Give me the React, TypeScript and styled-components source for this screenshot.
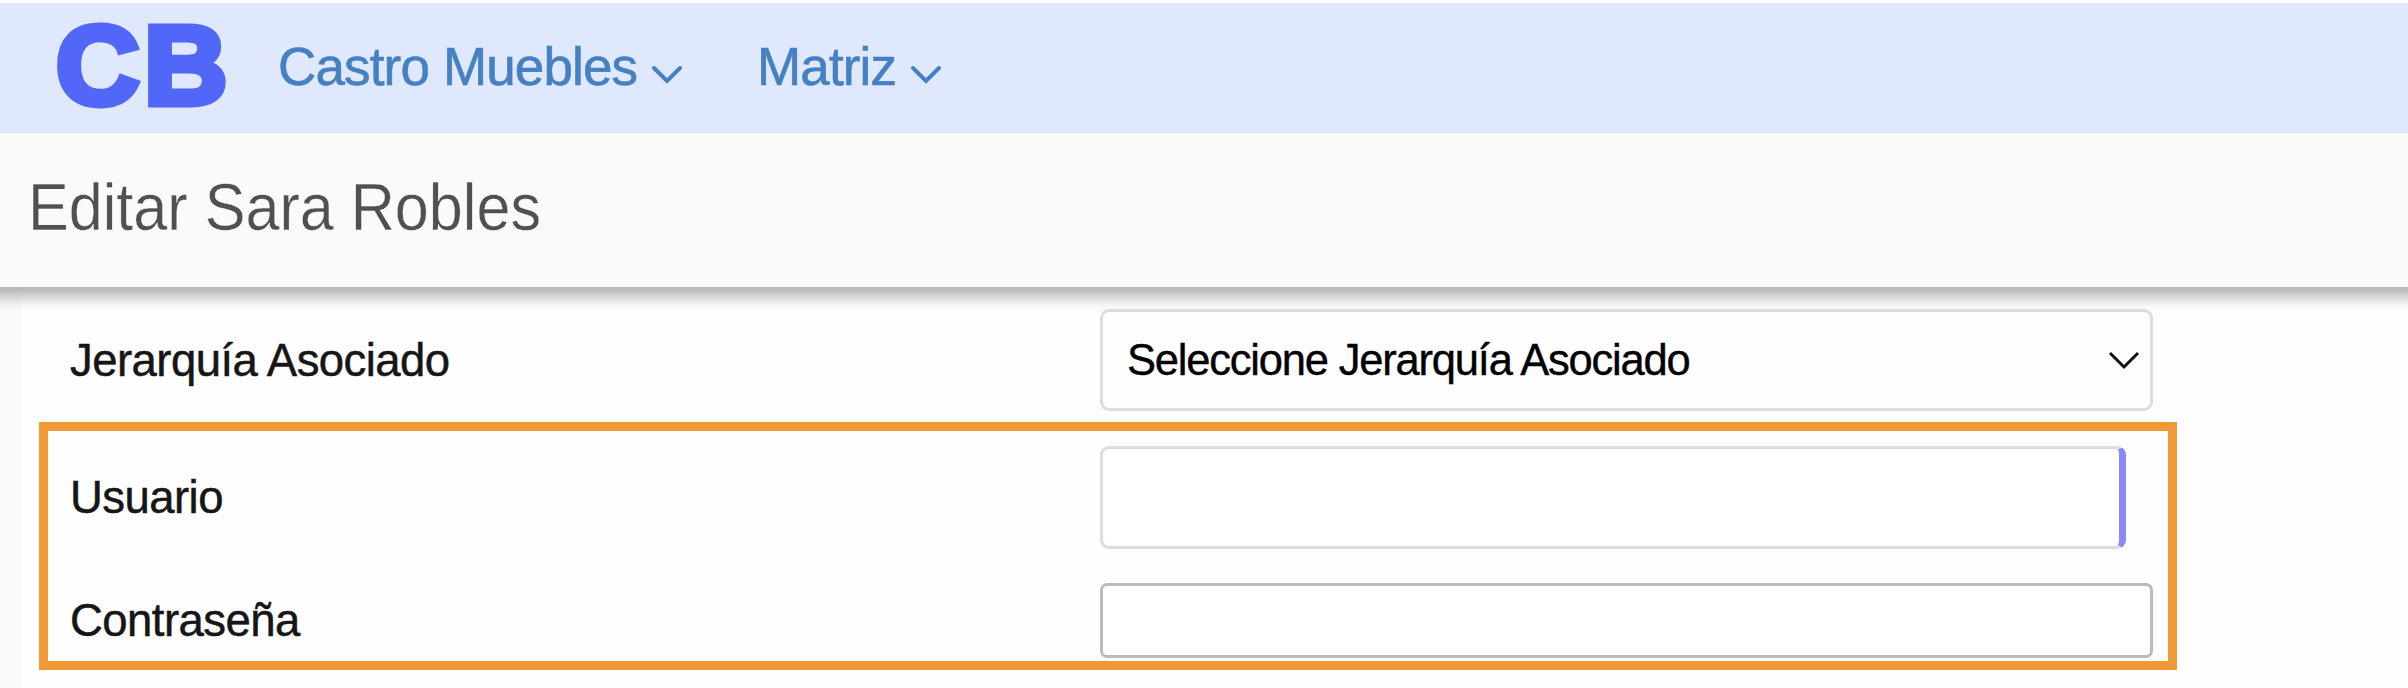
import React from "react";
import styled, { createGlobalStyle } from "styled-components";

const GlobalStyle = createGlobalStyle`
  *, *::before, *::after { box-sizing: border-box; }
  html, body { margin: 0; padding: 0; background: #fefefe; }
  body { font-family: "Liberation Sans", Arial, sans-serif; overflow: hidden; }
`;

const Page = styled.div`
  width: 2408px;
  height: 688px;
  padding-top: 3px;
  display: flex;
  flex-direction: column;
  background: #fefefe;
  overflow: hidden;
`;

const Navbar = styled.header`
  flex: none;
  height: 130px;
  display: flex;
  align-items: flex-start;
  padding-left: 54px;
  background: #dfe8fd;
`;

const Logo = styled.div`
  width: 225px;
  height: 130px;
  padding-left: 2px;
  font-weight: 700;
  font-size: 112px;
  line-height: 126px;
  letter-spacing: 4.5px;
  color: #5067f8;
  -webkit-text-stroke: 7px #5067f8;
  transform: scaleX(1.03);
  transform-origin: left;
  white-space: nowrap;
`;

const NavItem = styled.button<{ $width: number }>`
  width: ${(p) => p.$width}px;
  height: 130px;
  padding: 0;
  border: 0;
  background: none;
  display: flex;
  align-items: flex-start;
  justify-content: space-between;
  color: #4480c2;
  font-family: inherit;
  font-size: 53px;
  line-height: 128px;
  letter-spacing: -0.85px;
  -webkit-text-stroke: 0.6px #4480c2;
  white-space: nowrap;
  & + & { margin-left: 75px; }
`;

const NavLabel = styled.span`
  margin-left: -1px;
`;

const NavChevron = styled.svg`
  width: 32px;
  height: 20px;
  margin-top: 61px;
  flex: none;
`;

const TitleBar = styled.div`
  flex: none;
  position: relative;
  z-index: 1;
  height: 154px;
  padding-left: 28px;
  background: #fafafa;
  box-shadow: 0 -10px 14px 20px #b4b0b0;
  clip-path: inset(0 0 -40px 0);
`;

const Title = styled.h1`
  margin: 0;
  font-size: 66px;
  font-weight: 400;
  line-height: 148px;
  color: #505050;
  -webkit-text-stroke: 0.4px #fafafa;
  transform: scaleX(0.926);
  transform-origin: left;
  white-space: nowrap;
`;

const Form = styled.main`
  flex: 1;
  padding: 22px 0 0 17px;
  border-left: 22px solid #fafafa;
`;

const Row = styled.div<{ $height: number; $inset: number }>`
  display: flex;
  align-items: center;
  height: ${(p) => p.$height}px;
  padding-left: ${(p) => p.$inset}px;
`;

const Label = styled.label`
  flex: none;
  width: 1031px;
  padding: 1px 0 0 1px;
  font-size: 45.5px;
  line-height: 60px;
  letter-spacing: -0.55px;
  color: #161616;
  -webkit-text-stroke: 0.5px #161616;
`;

const SelectBox = styled.div`
  width: 1053px;
  height: 102px;
  display: flex;
  align-items: center;
  justify-content: space-between;
  padding: 0 10px 0 24px;
  border: 3px solid #ddd;
  border-radius: 9px;
  font-size: 43.5px;
  line-height: 60px;
  letter-spacing: -1.2px;
  color: #000;
  -webkit-text-stroke: 0.4px #000;
`;

const SelectValue = styled.span`
  margin-top: -1px;
`;

const TextInput = styled.input<{ $required?: boolean }>`
  width: ${(p) => (p.$required ? 1026 : 1053)}px;
  height: ${(p) => (p.$required ? 103 : 75)}px;
  border: 3px solid ${(p) => (p.$required ? "#ddd" : "#bbb")};
  border-right: ${(p) => (p.$required ? "7px solid #8989fa" : "3px solid #bbb")};
  border-radius: ${(p) => (p.$required ? 9 : 7)}px;
  background: #fff;
  outline: none;
`;

const Highlight = styled.section`
  width: 2138px;
  height: 248px;
  margin-top: 11px;
  padding-top: 15px;
  border: 9px solid #f09a37;
`;

const Spacer = styled.div`
  height: 34px;
`;

const Chevron = () => (
  <NavChevron viewBox="0 0 32 20" fill="none" stroke="#4480c2" strokeWidth="4" strokeLinecap="round">
    <path d="M3 4 L16 17 L29 4" />
  </NavChevron>
);

export default function App() {
  return (
    <Page>
      <GlobalStyle />
      <Navbar>
        <Logo>CB</Logo>
        <NavItem $width={404}>
          <NavLabel>Castro Muebles</NavLabel>
          <Chevron />
        </NavItem>
        <NavItem $width={184}>
          <NavLabel>Matriz</NavLabel>
          <Chevron />
        </NavItem>
      </Navbar>
      <TitleBar>
        <Title>Editar Sara Robles</Title>
      </TitleBar>
      <Form>
        <Row $height={102} $inset={30}>
          <Label>Jerarquía Asociado</Label>
          <SelectBox>
            <SelectValue>Seleccione Jerarquía Asociado</SelectValue>
            <svg width="32" height="20" viewBox="0 0 32 20" fill="none" stroke="#111" strokeWidth="3">
              <path d="M2 3 L16 17 L30 3" />
            </svg>
          </SelectBox>
        </Row>
        <Highlight>
          <Row $height={103} $inset={21}>
            <Label htmlFor="usuario">Usuario</Label>
            <TextInput id="usuario" $required />
          </Row>
          <Spacer />
          <Row $height={75} $inset={21}>
            <Label htmlFor="contrasena">Contraseña</Label>
            <TextInput id="contrasena" type="password" />
          </Row>
        </Highlight>
      </Form>
    </Page>
  );
}
